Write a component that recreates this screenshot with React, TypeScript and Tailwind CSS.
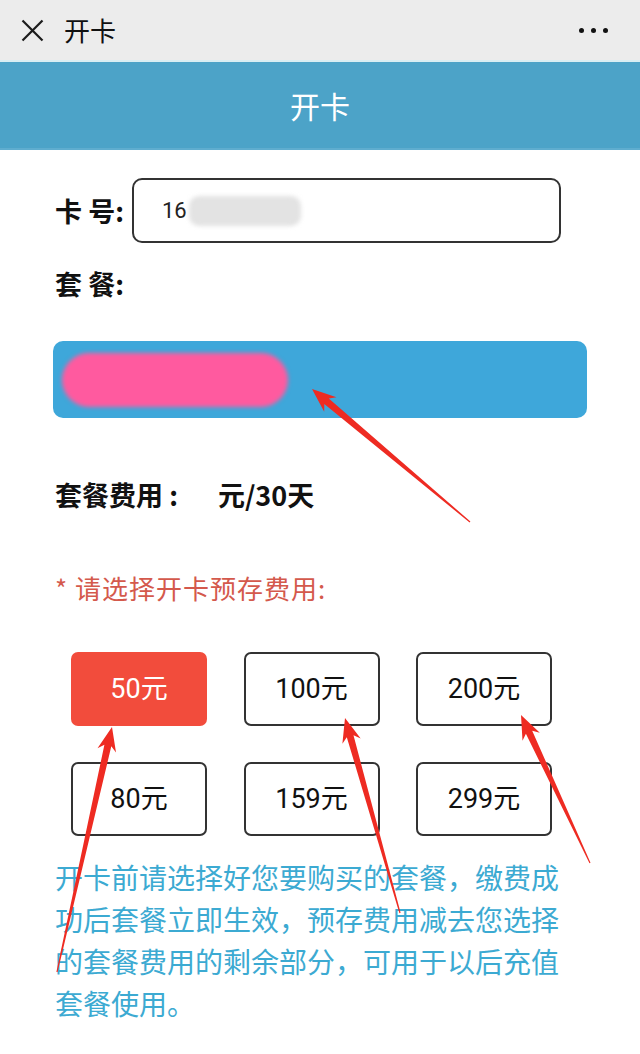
import React from 'react';

const cjk = '"Noto Sans CJK SC", "Noto Sans", sans-serif';
const num = 'Roboto, "Noto Sans CJK SC", sans-serif';

const amounts = [
  { label: '50', active: true },
  { label: '100' },
  { label: '200' },
  { label: '80' },
  { label: '159' },
  { label: '299' },
];

// tail -> head, in page pixels
const arrows: [number, number, number, number][] = [
  [470, 522, 312, 389],
  [57, 972, 112, 727],
  [400, 913, 345, 718],
  [590, 863, 521, 715],
];

function arrowPoints(tx: number, ty: number, hx: number, hy: number) {
  const dx = hx - tx;
  const dy = hy - ty;
  const len = Math.hypot(dx, dy);
  const ux = dx / len;
  const uy = dy / len;
  const nx = -uy;
  const ny = ux;
  const headLen = 24;
  const bx = hx - ux * headLen;
  const by = hy - uy * headLen;
  const nx2 = hx - ux * (headLen - 5);
  const ny2 = hy - uy * (headLen - 5);
  const p = (x: number, y: number) => `${x.toFixed(1)},${y.toFixed(1)}`;
  return [
    p(tx + nx * 0.6, ty + ny * 0.6),
    p(nx2 + nx * 3.5, ny2 + ny * 3.5),
    p(bx + nx * 9.5, by + ny * 9.5),
    p(hx, hy),
    p(bx - nx * 9.5, by - ny * 9.5),
    p(nx2 - nx * 3.5, ny2 - ny * 3.5),
    p(tx - nx * 0.6, ty - ny * 0.6),
  ].join(' ');
}

const Arrows = () => (
  <svg
    className="absolute inset-0 pointer-events-none"
    width="640"
    height="1054"
    viewBox="0 0 640 1054"
  >
    {arrows.map((a, i) => (
      <polygon key={i} points={arrowPoints(...a)} fill="#ee2b22" />
    ))}
  </svg>
);

export default function App() {
  return (
    <div
      className="relative w-[640px] h-[1054px] overflow-hidden bg-white"
      style={{ fontFamily: cjk }}
    >
      {/* wechat title bar */}
      <div className="h-[60px] bg-[#ececec] flex items-center">
        <svg className="ml-[21px]" width="23" height="23" viewBox="0 0 23 23">
          <path d="M1.5 1.5 21.5 21.5M21.5 1.5 1.5 21.5" stroke="#1b1b1b" strokeWidth="2.2" />
        </svg>
        <span className="ml-[20px] text-[26px] leading-none text-[#111]">开卡</span>
        <div className="ml-auto mr-[32px] flex gap-[7px]">
          <span className="w-[5px] h-[5px] rounded-full bg-[#111]" />
          <span className="w-[5px] h-[5px] rounded-full bg-[#111]" />
          <span className="w-[5px] h-[5px] rounded-full bg-[#111]" />
        </div>
      </div>

      {/* page header */}
      <div className="h-[90px] bg-[#4ca3c8] border-t-2 border-[#d9eef3] border-b-2 border-b-[#5fadcf] flex items-center justify-center">
        <span className="text-[30px] text-white leading-none">开卡</span>
      </div>

      <div className="px-[55px]">
        {/* card number */}
        <div className="mt-[28px] h-[65px] flex items-center">
          <span className="w-[77px] text-[27px] font-bold text-[#111] leading-none">卡 号:</span>
          <div className="w-[429px] h-[65px] rounded-[10px] border-2 border-[#333] flex items-center pl-[28px]">
            <span className="text-[22px] text-[#222]" style={{ fontFamily: num }}>16</span>
            <span className="ml-[2px] w-[112px] h-[30px] rounded-[10px] bg-[#e3e3e3] blur-[2px]" />
          </div>
        </div>

        {/* package */}
        <div className="mt-[25px] h-[30px] flex items-center text-[27px] font-bold text-[#111] leading-none">
          套 餐:
        </div>

        <div className="mt-[43px] -mx-[2px] h-[77px] rounded-[10px] bg-[#3ea7da] flex items-center px-[9px]">
          <div className="w-[226px] h-[54px] rounded-full bg-[#ff5a9f] blur-[2px]" />
        </div>

        <div className="mt-[61px] h-[30px] flex items-center text-[27px] font-bold text-[#111] leading-none">
          <span>套餐费用 :</span>
          <span className="w-[40px]" />
          <span>元/30天</span>
        </div>

        <div className="mt-[64px] h-[30px] flex items-center text-[26px] tracking-[1px] text-[#d4594c] leading-none">
          * 请选择开卡预存费用:
        </div>

        {/* amount choices */}
        <div className="mt-[49px] pl-[16px] grid grid-cols-[136px_136px_136px] gap-x-[36.5px] gap-y-[36px]">
          {amounts.map((a) => (
            <div
              key={a.label}
              className={
                a.active
                  ? 'h-[74px] rounded-[7px] bg-[#f24c3c] flex items-center justify-center text-[27px] text-white'
                  : 'h-[74px] rounded-[7px] border-2 border-[#333] bg-white flex items-center justify-center text-[27px] text-[#111]'
              }
              style={{ fontFamily: num }}
            >
              {a.label}元
            </div>
          ))}
        </div>

        <p className="mt-[20px] text-[28px] leading-[42px] text-[#3caad2]">
          开卡前请选择好您要购买的套餐，缴费成功后套餐立即生效，预存费用减去您选择的套餐费用的剩余部分，可用于以后充值套餐使用。
        </p>
      </div>

      <Arrows />
    </div>
  );
}
